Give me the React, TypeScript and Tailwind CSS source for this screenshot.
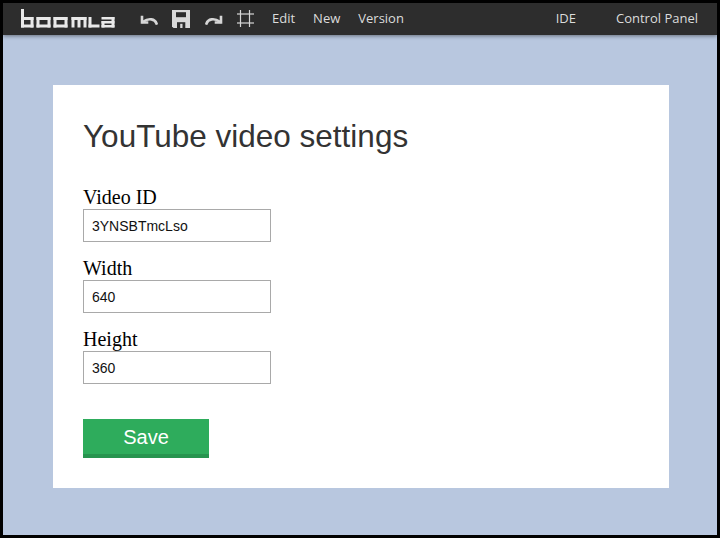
import React from "react";

function Logo() {
  const c = "#e9e9e9";
  return (
    <svg width="94" height="19" viewBox="0 0 94 19" className="block">
      <g fill={c}>
        {/* b */}
        <rect x="0" y="0" width="3" height="18.5" />
        <rect x="0" y="8" width="12.5" height="3" />
        <rect x="9.5" y="8" width="3" height="10.5" />
        <rect x="0" y="15.5" width="12.5" height="3" />
        {/* o */}
        <rect x="15.5" y="8" width="14" height="3" />
        <rect x="15.5" y="15.5" width="14" height="3" />
        <rect x="15.5" y="8" width="3" height="10.5" />
        <rect x="26.5" y="8" width="3" height="10.5" />
        {/* o */}
        <rect x="32.5" y="8" width="14" height="3" />
        <rect x="32.5" y="15.5" width="14" height="3" />
        <rect x="32.5" y="8" width="3" height="10.5" />
        <rect x="43.5" y="8" width="3" height="10.5" />
        {/* m */}
        <rect x="50.5" y="8" width="15" height="3" />
        <rect x="50.5" y="8" width="3" height="10.5" />
        <rect x="56.5" y="8" width="3" height="10.5" />
        <rect x="62.5" y="8" width="3" height="10.5" />
        {/* L */}
        <rect x="67.5" y="8" width="3" height="10.5" />
        <rect x="67.5" y="15.5" width="11" height="3" />
        {/* a */}
        <rect x="80.5" y="8" width="13" height="2.5" />
        <rect x="90.5" y="8" width="3" height="10.5" />
        <rect x="80.5" y="12" width="13" height="2.5" />
        <rect x="80.5" y="12" width="3" height="6.5" />
        <rect x="80.5" y="16" width="13" height="2.5" />
      </g>
    </svg>
  );
}

function UndoIcon({ flip = false }: { flip?: boolean }) {
  return (
    <svg
      width="18"
      height="10"
      viewBox="0 0 18 10"
      className="block"
      style={flip ? { transform: "scaleX(-1)" } : undefined}
    >
      <g fill="none" stroke="#d6d6d6" strokeWidth="2.6" strokeLinecap="square">
        <path d="M16.5 8.5 C15 4 9 2.5 3 6.8" />
        <path d="M2 2 L2 7.5 L7 7.5" strokeLinejoin="miter" />
      </g>
    </svg>
  );
}

function SaveIcon() {
  return (
    <svg width="18" height="18" viewBox="0 0 18 18" className="block">
      <path d="M0 0 H18 V18 H1.5 L0 16.5 Z" fill="#d9d9d9" />
      <rect x="4" y="2.2" width="10" height="5" fill="#2d2d2d" />
      <rect x="5" y="12.2" width="8.3" height="5.8" fill="#2d2d2d" />
      <rect x="8.2" y="13.8" width="2.3" height="4.2" fill="#d9d9d9" />
    </svg>
  );
}

function HashIcon() {
  return (
    <svg width="17" height="17" viewBox="0 0 17 17" className="block">
      <g stroke="#d6d6d6" strokeWidth="1.2">
        <line x1="3.5" y1="0" x2="3.5" y2="17" />
        <line x1="12.5" y1="0" x2="12.5" y2="17" />
        <line x1="0" y1="4" x2="17" y2="4" />
        <line x1="0" y1="13" x2="17" y2="13" />
      </g>
    </svg>
  );
}

function Field({ label, value }: { label: string; value: string }) {
  return (
    <div className="flex flex-col">
      <label className="font-['Liberation_Serif','Times_New_Roman',serif] text-[20px] leading-[24px] text-black">
        {label}
      </label>
      <input
        readOnly
        value={value}
        className="box-border w-[188px] h-[33px] border border-[#a9a9a9] bg-white pl-[8px] font-['Liberation_Sans',Arial,sans-serif] text-[14px] text-[#111] outline-none"
      />
    </div>
  );
}

export default function App() {
  return (
    <div className="box-border w-[720px] h-[538px] border-[3px] border-black flex flex-col bg-[#b8c7df] overflow-hidden">
      <nav className="relative z-10 h-[32px] shrink-0 bg-[#2d2d2d] shadow-[0_1px_4px_rgba(0,0,0,0.45)] flex items-center font-['Open_Sans',sans-serif] text-[13px] text-[#dcdcdc]">
        <div className="ml-[18px] mt-[-1px]">
          <Logo />
        </div>
        <div className="ml-[25px] mt-[2px]">
          <UndoIcon />
        </div>
        <div className="ml-[14px]">
          <SaveIcon />
        </div>
        <div className="ml-[15px] mt-[2px]">
          <UndoIcon flip />
        </div>
        <div className="ml-[14px] mt-[-1px]">
          <HashIcon />
        </div>
        <span className="ml-[9px] px-[9px]">Edit</span>
        <span className="px-[9px]">New</span>
        <span className="px-[9px]">Version</span>
        <span className="ml-auto px-[20px]">IDE</span>
        <span className="pl-[20px] pr-[19px]">Control Panel</span>
      </nav>
      <main className="flex-1 pt-[50px] pl-[50px]">
        <div className="w-[616px] h-[403px] bg-white pl-[30px] pt-[33px] flex flex-col">
          <h1 className="font-['Liberation_Sans',Arial,sans-serif] text-[31.5px] leading-[36px] text-[#333] font-normal">
            YouTube video settings
          </h1>
          <div className="mt-[31px] flex flex-col gap-[14px]">
            <Field label="Video ID" value="3YNSBTmcLso" />
            <Field label="Width" value="640" />
            <Field label="Height" value="360" />
          </div>
          <button className="mt-[35px] box-border w-[126px] h-[39px] bg-[#2eac5c] border-b-[4px] border-[#27944f] text-white font-['Liberation_Sans',Arial,sans-serif] text-[20px] leading-none">
            Save
          </button>
        </div>
      </main>
    </div>
  );
}
